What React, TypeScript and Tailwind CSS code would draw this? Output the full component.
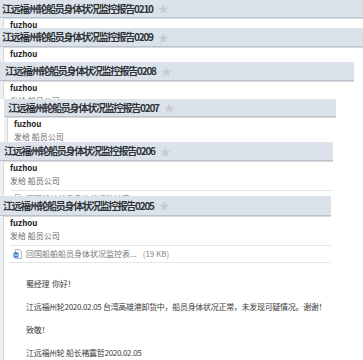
import React from 'react'

interface LayerProps {
  code: string;
  outer: string;
  header: string;
  titlePad: string;
  children?: React.ReactNode;
}

const DocIcon = () => (
  <svg width="9" height="10" viewBox="0 0 9 10">
    <path d="M2.5 0.5h4l2 2v7h-6z" fill="#fff" stroke="#9aa3ad" strokeWidth="0.8" />
    <rect x="0.5" y="3.5" width="5" height="5" rx="0.6" fill="#2b6cc4" />
    <path d="M1.4 4.7l0.7 2.6 0.9-2 0.9 2 0.7-2.6" fill="none" stroke="#fff" strokeWidth="0.6" />
  </svg>
)

const Layer = ({ code, outer, header, titlePad, children }: LayerProps) => (
  <section className={`${outer} overflow-hidden shrink-0 flex flex-col`}>
    <div className={`${header} ${titlePad} shrink-0 flex items-center gap-[5px] bg-[#dce2e9] border-b border-[#bac2cb]`}>
      <span className="text-[10px] font-bold tracking-[-1.2px] text-[#2e3338] leading-none whitespace-nowrap">
        江远福州轮船员身体状况监控报告{code}
      </span>
      <span className="text-[11px] leading-none text-[#c6cbd1]">★</span>
    </div>
    <div className="flex-1 bg-[#eef0f2] pl-[3px]">
      <div className="h-full bg-white border-l border-t border-[#d6dadf] pl-[6px]">
        <div className="text-[8px] leading-[12px] font-bold text-[#222]">fuzhou</div>
        <div className="text-[8px] leading-[14px] text-[#666]">发给 船员公司</div>
        {children}
      </div>
    </div>
  </section>
)

const Attachment = () => (
  <div className="mt-[2px] h-[18px] flex items-center gap-[4px] border-y border-[#e4e7ea] pl-[3px]">
    <DocIcon />
    <span className="text-[8px] text-[#777] whitespace-nowrap">回国船舶船员身体状况监控表...</span>
    <span className="text-[8px] text-[#888] ml-[2px]">(19 KB)</span>
  </div>
)

const App = () => {
  return (
    <div className="w-[363px] h-[360px] overflow-hidden bg-white flex flex-col font-['Noto_Sans_CJK_SC','Microsoft_YaHei',sans-serif]">
      <Layer code="0210" outer="w-[363px] h-[28px]" header="h-[18px]" titlePad="pl-[2px]" />
      <Layer code="0209" outer="w-[363px] h-[34px]" header="h-[19px]" titlePad="pl-[2px]" />
      <Layer code="0208" outer="w-[354px] h-[37px]" header="h-[19px]" titlePad="pl-[5px]" />
      <Layer code="0207" outer="w-[332px] ml-[4px] h-[43px]" header="h-[18px]" titlePad="pl-[4px]" />
      <Layer code="0206" outer="w-[333px] h-[54px]" header="h-[19px]" titlePad="pl-[4px]">
        <Attachment />
      </Layer>
      <Layer code="0205" outer="w-[331px] flex-1" header="h-[20px]" titlePad="pl-[3px]">
        <Attachment />
        <div className="pl-[16px] pt-[15px] flex flex-col gap-[11px] text-[8px] tracking-[-0.3px] leading-[12px] text-[#3a3a3a] whitespace-nowrap">
          <p>蜀经理&nbsp;&nbsp;你好！</p>
          <p>江远福州轮2020.02.05 台湾高雄港卸货中，船员身体状况正常，未发现可疑情况。谢谢！</p>
          <p>致敬！</p>
          <p>江远福州轮 船长褚震哲2020.02.05</p>
        </div>
      </Layer>
    </div>
  )
}

export default App
